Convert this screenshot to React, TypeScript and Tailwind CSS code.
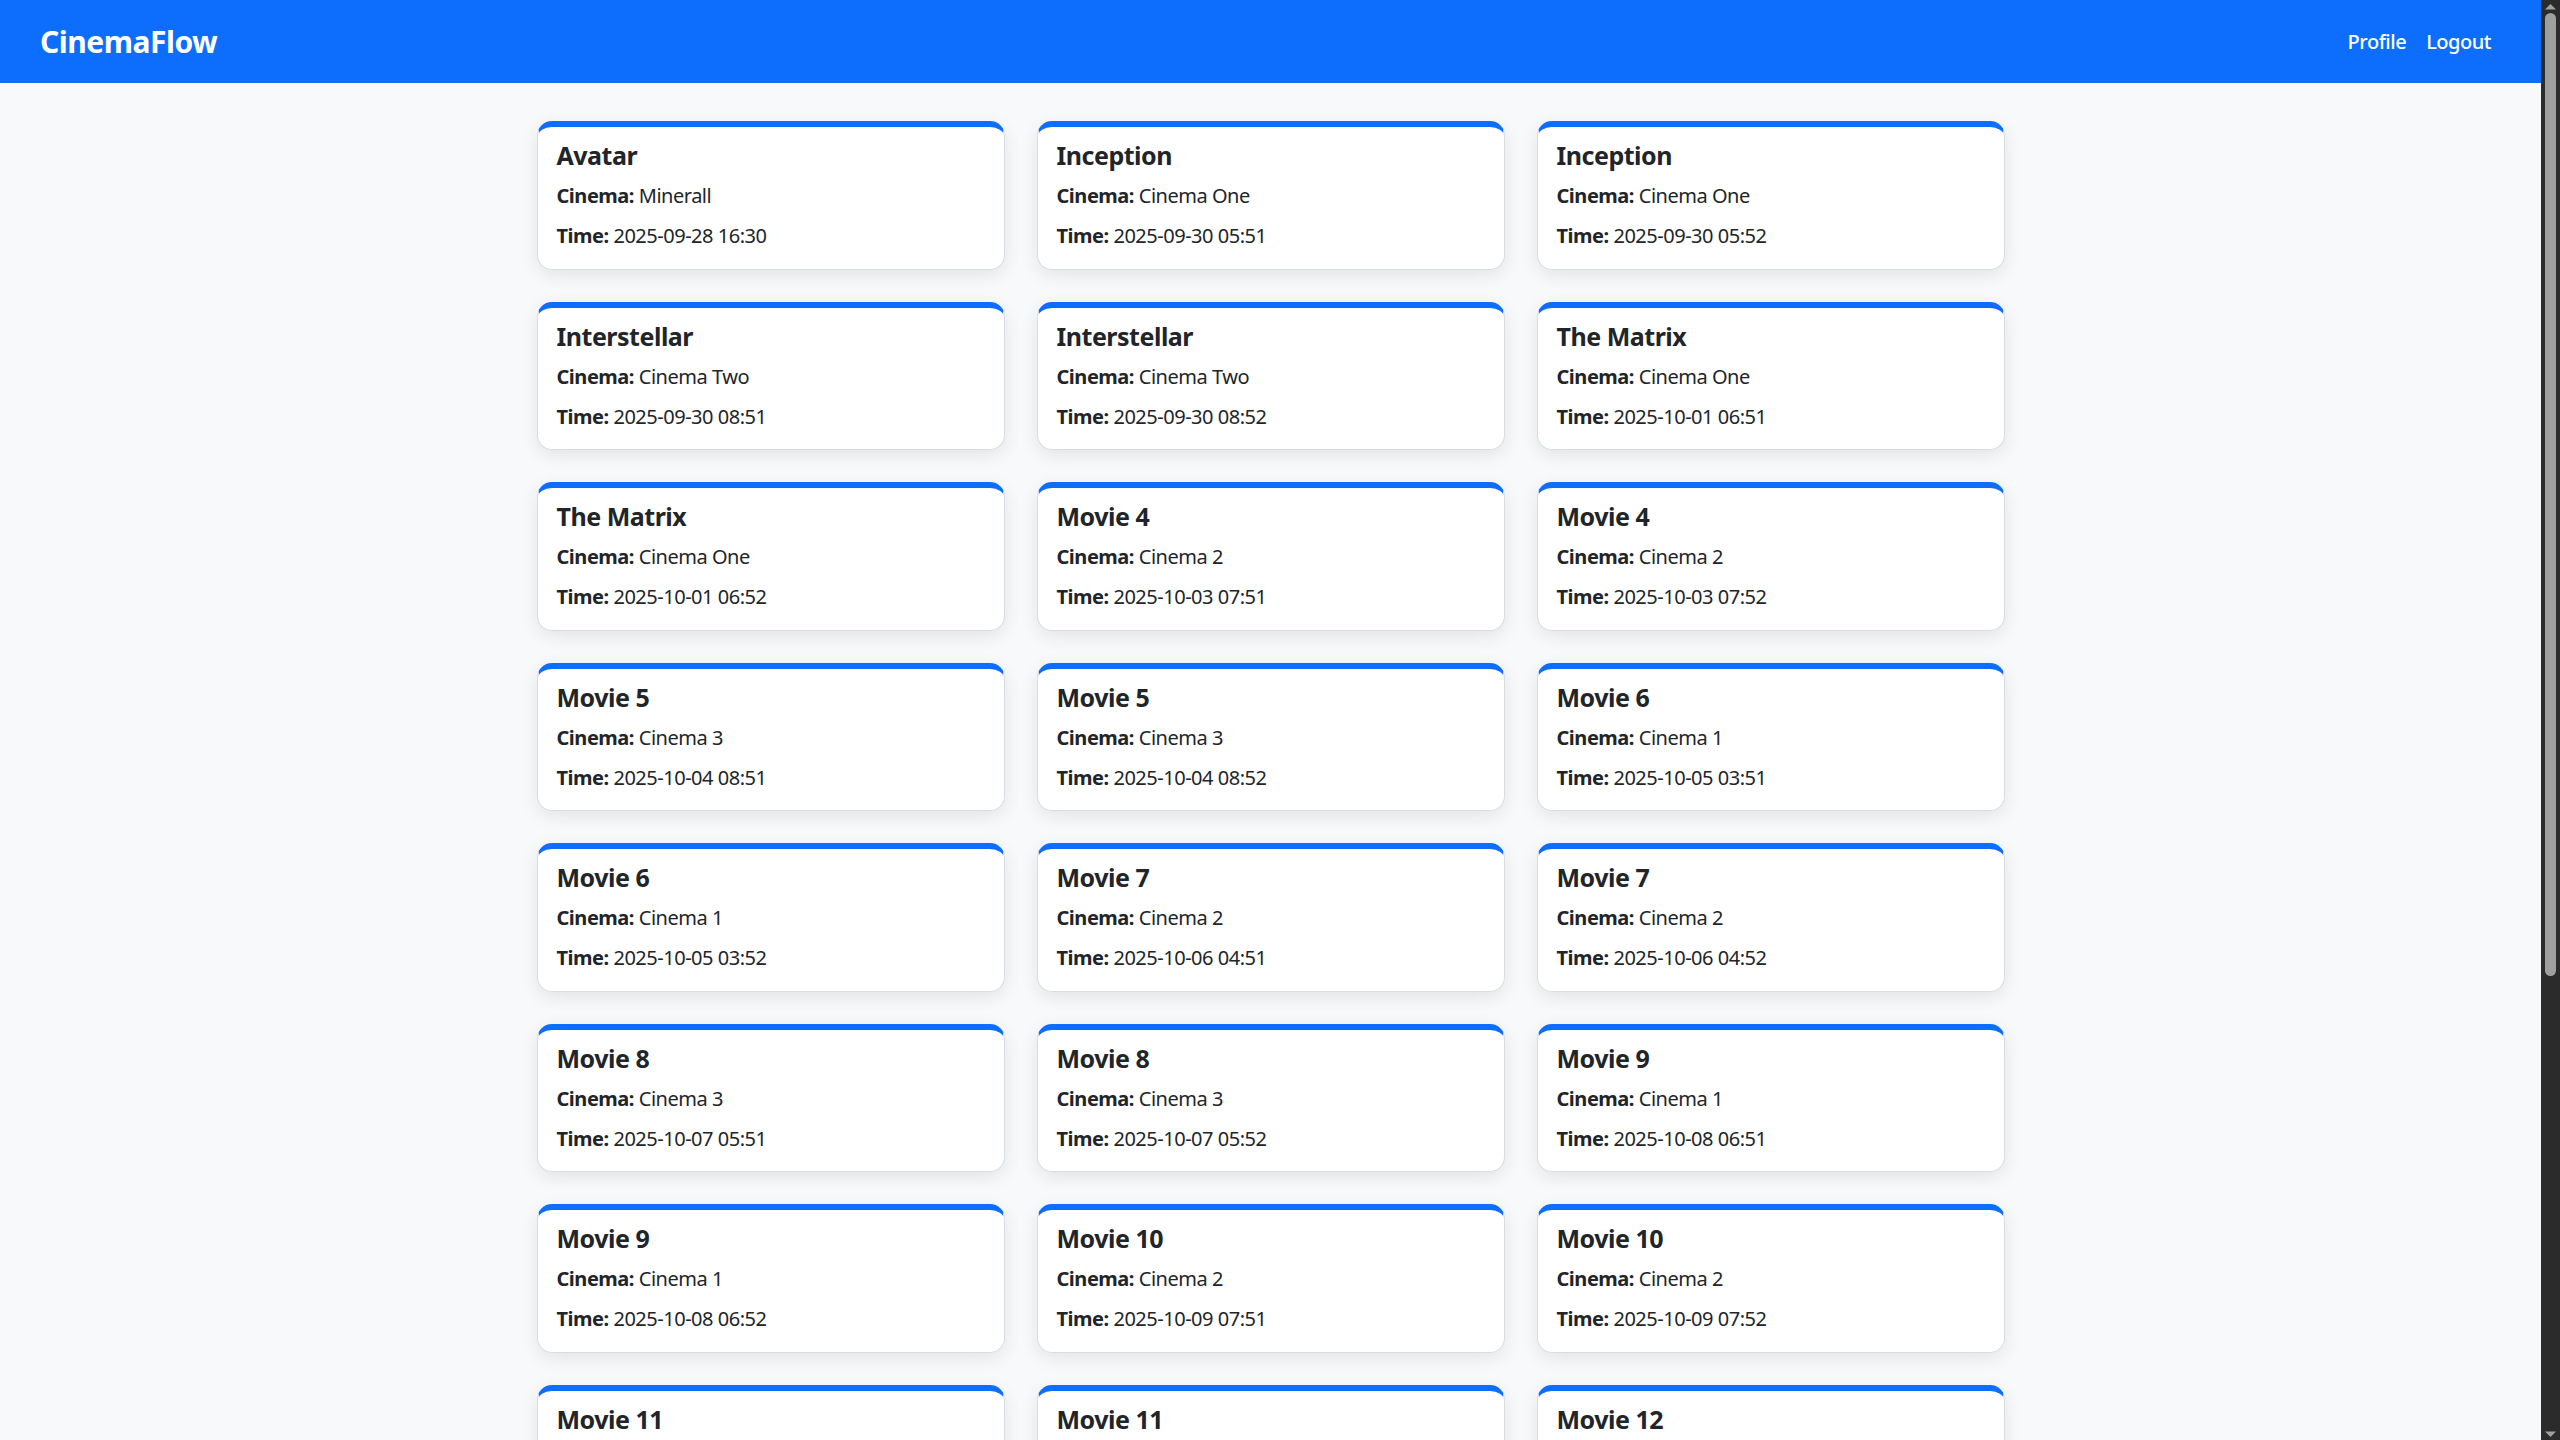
import React from 'react';

const showtimes = [
  { id: 1, title: 'Avatar', cinema: 'Minerall', time: '2025-09-28 16:30' },
  { id: 2, title: 'Inception', cinema: 'Cinema One', time: '2025-09-30 05:51' },
  { id: 3, title: 'Inception', cinema: 'Cinema One', time: '2025-09-30 05:52' },
  { id: 4, title: 'Interstellar', cinema: 'Cinema Two', time: '2025-09-30 08:51' },
  { id: 5, title: 'Interstellar', cinema: 'Cinema Two', time: '2025-09-30 08:52' },
  { id: 6, title: 'The Matrix', cinema: 'Cinema One', time: '2025-10-01 06:51' },
  { id: 7, title: 'The Matrix', cinema: 'Cinema One', time: '2025-10-01 06:52' },
  { id: 8, title: 'Movie 4', cinema: 'Cinema 2', time: '2025-10-03 07:51' },
  { id: 9, title: 'Movie 4', cinema: 'Cinema 2', time: '2025-10-03 07:52' },
  { id: 10, title: 'Movie 5', cinema: 'Cinema 3', time: '2025-10-04 08:51' },
  { id: 11, title: 'Movie 5', cinema: 'Cinema 3', time: '2025-10-04 08:52' },
  { id: 12, title: 'Movie 6', cinema: 'Cinema 1', time: '2025-10-05 03:51' },
  { id: 13, title: 'Movie 6', cinema: 'Cinema 1', time: '2025-10-05 03:52' },
  { id: 14, title: 'Movie 7', cinema: 'Cinema 2', time: '2025-10-06 04:51' },
  { id: 15, title: 'Movie 7', cinema: 'Cinema 2', time: '2025-10-06 04:52' },
  { id: 16, title: 'Movie 8', cinema: 'Cinema 3', time: '2025-10-07 05:51' },
  { id: 17, title: 'Movie 8', cinema: 'Cinema 3', time: '2025-10-07 05:52' },
  { id: 18, title: 'Movie 9', cinema: 'Cinema 1', time: '2025-10-08 06:51' },
  { id: 19, title: 'Movie 9', cinema: 'Cinema 1', time: '2025-10-08 06:52' },
  { id: 20, title: 'Movie 10', cinema: 'Cinema 2', time: '2025-10-09 07:51' },
  { id: 21, title: 'Movie 10', cinema: 'Cinema 2', time: '2025-10-09 07:52' },
  { id: 22, title: 'Movie 11', cinema: 'Cinema 3', time: '2025-10-10 08:51' },
  { id: 23, title: 'Movie 11', cinema: 'Cinema 3', time: '2025-10-10 08:52' },
  { id: 24, title: 'Movie 12', cinema: 'Cinema 1', time: '2025-10-11 03:51' },
];

const App = () => {
  return (
    <div className="h-screen overflow-hidden flex bg-[#f8f9fa] text-[#212529] font-['Noto_Sans','Open_Sans',sans-serif] tracking-[-0.03em]">
      <div className="flex-1 min-w-0">
        <nav className="h-[83px] bg-[#0d6efd] flex items-center justify-between px-10">
          <span className="text-[30px] font-bold text-white leading-none">CinemaFlow</span>
          <div className="flex items-center">
            <a className="px-[10px] text-[20px] font-medium text-white">Profile</a>
            <a className="px-[10px] text-[20px] font-medium text-white">Logout</a>
          </div>
        </nav>

        <main className="max-w-[1500px] mx-auto px-4 pt-[38px] pb-10">
          <div className="grid grid-cols-3 gap-x-8 gap-y-8">
            {showtimes.map((s) => (
              <div
                key={s.id}
                className="bg-white rounded-[15px] border border-[#d9dde1] border-t-[6px] border-t-[#0d6efd] shadow-[0_5px_18px_rgba(0,0,0,0.09)] px-[19px] pt-[13px] pb-[17.5px]"
              >
                <h5 className="text-[25px] leading-[30px] font-bold mb-[11px]">{s.title}</h5>
                <p className="text-[20px] leading-[30px] mb-[10px]">
                  <span className="font-bold">Cinema:</span> {s.cinema}
                </p>
                <p className="text-[20px] leading-[30px]">
                  <span className="font-bold">Time:</span> {s.time}
                </p>
              </div>
            ))}
          </div>
        </main>
      </div>

      {/* window scrollbar */}
      <div className="w-[19px] h-full bg-[#2b2b2b] flex flex-col items-center pt-[2px] pb-[2px]">
        <svg width="13" height="8" viewBox="0 0 13 8" className="mt-[1px]">
          <path d="M6.5 1 L12 6.5 L1 6.5 Z" fill="#a0a0a0" />
        </svg>
        <div className="mt-[2px] w-[11px] h-[963px] rounded-full bg-[#9f9f9f]" />
        <div className="flex-1" />
        <svg width="13" height="8" viewBox="0 0 13 8">
          <path d="M1 1.5 L12 1.5 L6.5 7 Z" fill="#a0a0a0" />
        </svg>
      </div>
    </div>
  );
};

export default App;
